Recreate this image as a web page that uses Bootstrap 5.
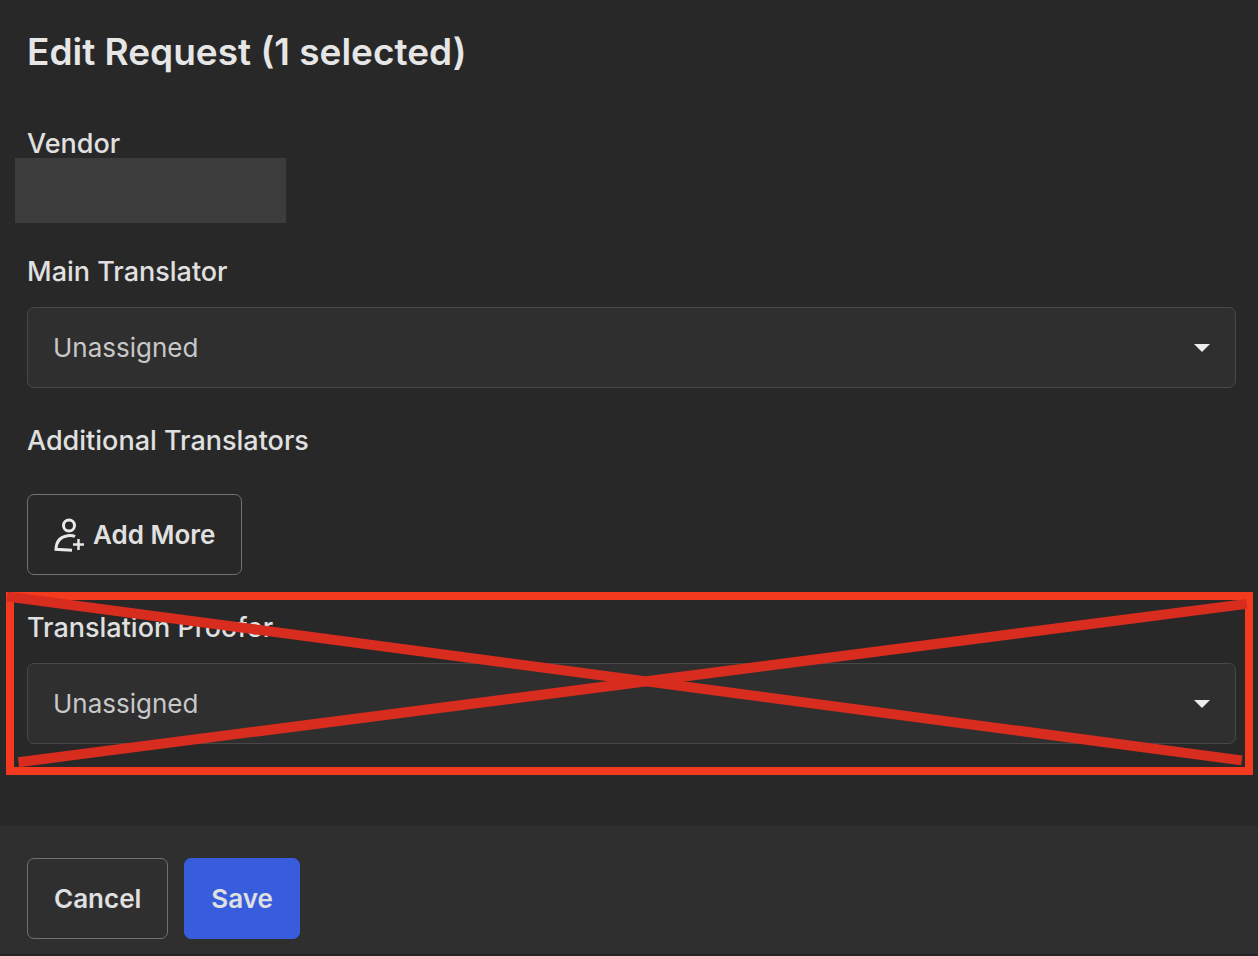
<!DOCTYPE html>
<html lang="en" data-bs-theme="dark">
<head>
<meta charset="utf-8">
<meta name="viewport" content="width=device-width, initial-scale=1">
<title>Edit Request</title>
<link href="https://cdn.jsdelivr.net/npm/bootstrap@5.3.0/dist/css/bootstrap.min.css" rel="stylesheet">
<style>
  body { background: #282828; color: #e0e0e0; font-family: Inter, "Liberation Sans", sans-serif; font-size: 26px; line-height: 32px; }
  .request-form { padding: 32px 22px 0 27px; }
  .request-title { font-size: 37px; line-height: 40px; font-weight: 600; margin-bottom: 56px; color: #e6e6e6; }
  .field-label { display: block; font-size: 27px; font-weight: 500; line-height: 32px; margin: 0; }
  .vendor-value { width: 271px; height: 65px; margin: -2px 0 33px -12px; background: #3c3c3c; }
  .field-group { margin-bottom: 37px; }
  .form-select.request-select {
    height: 81px; margin-top: 19px; padding: 0 60px 0 25px; font-size: 26px; line-height: 32px;
    color: #c8c8c8; border: 1px solid #484848; border-radius: 7px; background-color: #2f2f2f;
    background-image: url("data:image/svg+xml,%3csvg xmlns='http://www.w3.org/2000/svg' viewBox='0 0 16 8'%3e%3cpath d='M0 0h16L8 8z' fill='%23ededed'/%3e%3c/svg%3e");
    background-size: 16px 8px; background-position: right 25px center;
  }
  .btn.request-btn { height: 81px; padding: 0 26px; font-size: 26px; font-weight: 600; line-height: 32px; border-radius: 7px; color: #e0e0e0; border: 1px solid #717171; }
  .btn.request-add { margin-top: 37px; gap: 9px; }
  .btn.request-save { background: #375ddd; border-color: #375ddd; }
  .crossed-mark { position: absolute; inset: -20px -17px -31px -21px; border: 8px solid #f43a1e; pointer-events: none; }
  .crossed-mark svg { position: absolute; inset: -8px; width: calc(100% + 16px); height: calc(100% + 16px); }
  .request-footer { margin-top: 82px; padding: 32px 27px 15px; background: #2f2f2f; border-bottom: 1px solid #252022; }
</style>
</head>
<body>
<form>
  <main class="request-form">
    <h1 class="request-title">Edit Request (1 selected)</h1>
    <div>
      <div class="field-label">Vendor</div>
      <div class="vendor-value"></div>
    </div>
    <div class="field-group">
      <label class="field-label" for="main-translator">Main Translator</label>
      <select class="form-select request-select" id="main-translator"><option>Unassigned</option></select>
    </div>
    <div class="field-group">
      <div class="field-label">Additional Translators</div>
      <button type="button" class="btn request-btn request-add d-flex align-items-center">
        <svg width="30" height="34" viewBox="1 0 30 34" fill="none" stroke="#e8e8e8" stroke-width="3" aria-hidden="true">
          <circle cx="16" cy="7.500" r="5.500"/>
          <path d="M22 18.500C20 17.500 17 17.300 14.500 17.800C7 19 3.200 24 3 31.300L19 32.300"/>
          <path d="M25.500 21v11M20 26.500h11" stroke-width="2.500"/>
        </svg>
        Add More
      </button>
    </div>
    <div class="position-relative">
      <label class="field-label" for="translation-proofer">Translation Proofer</label>
      <select class="form-select request-select" id="translation-proofer"><option>Unassigned</option></select>
      <div class="crossed-mark">
        <svg stroke="#d82c1e" stroke-width="10" aria-hidden="true">
          <line x1="0.1%" y1="2.5%" x2="99.1%" y2="92%"/>
          <line x1="1%" y1="93%" x2="99.500%" y2="6.500%"/>
        </svg>
      </div>
    </div>
  </main>
  <footer class="request-footer d-flex gap-3">
    <button type="button" class="btn request-btn">Cancel</button>
    <button type="submit" class="btn request-btn request-save">Save</button>
  </footer>
</form>
<script src="https://cdn.jsdelivr.net/npm/bootstrap@5.3.0/dist/js/bootstrap.bundle.min.js"></script>
</body>
</html>
